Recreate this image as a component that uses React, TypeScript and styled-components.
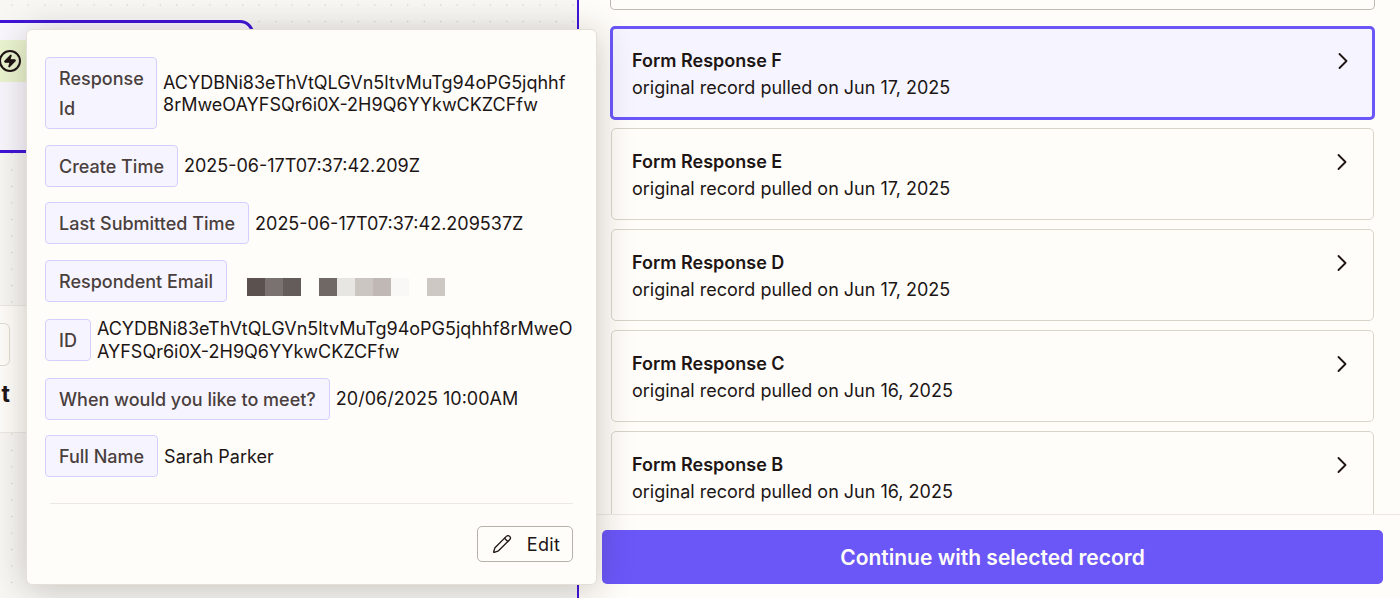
import styled, { createGlobalStyle } from 'styled-components';
import { ChevronRight, Pencil, Zap } from 'lucide-react';

const GlobalStyle = createGlobalStyle`
  html, body {
    margin: 0;
    height: 100%;
    overflow: hidden;
    background: #fffdf9;
    font-family: Inter, 'Liberation Sans', sans-serif;
    color: #201515;
  }
  * {
    box-sizing: border-box;
  }
`;

const fields = [
  { label: 'Response Id', value: 'ACYDBNi83eThVtQLGVn5ltvMuTg94oPG5jqhhf8rMweOAYFSQr6i0X-2H9Q6YYkwCKZCFfw' },
  { label: 'Create Time', value: '2025-06-17T07:37:42.209Z' },
  { label: 'Last Submitted Time', value: '2025-06-17T07:37:42.209537Z' },
  { label: 'Respondent Email', blurred: true },
  { label: 'ID', value: 'ACYDBNi83eThVtQLGVn5ltvMuTg94oPG5jqhhf8rMweOAYFSQr6i0X-2H9Q6YYkwCKZCFfw' },
  { label: 'When would you like to meet?', value: '20/06/2025 10:00AM' },
  { label: 'Full Name', value: 'Sarah Parker' },
];

const records = [
  { name: 'Form Response F', date: 'Jun 17, 2025', selected: true },
  { name: 'Form Response E', date: 'Jun 17, 2025' },
  { name: 'Form Response D', date: 'Jun 17, 2025' },
  { name: 'Form Response C', date: 'Jun 16, 2025' },
  { name: 'Form Response B', date: 'Jun 16, 2025' },
];

const blurGroups = [
  ['#5b5250', '#797270', '#645c5a'],
  ['#6f6865', '#e8e6e3', '#cbc6c2', '#bfb8b4', '#f9f8f6'],
  ['#cdc8c4'],
];

export default function App() {
  return (
    <Page>
      <GlobalStyle />
      <Canvas>
        <ZapNode>
          <NodeBar>
            <Zap size={14} strokeWidth={2} />
          </NodeBar>
        </ZapNode>
        <SideCard>
          <SideButton />
          <SideLetter>t</SideLetter>
        </SideCard>
        <Popover>
          <FieldList>
            {fields.map((field) => (
              <Field key={field.label}>
                <FieldLabel>{field.label}</FieldLabel>
                {field.blurred ? (
                  <Blurred>
                    {blurGroups.map((group, i) => (
                      <BlurGroup key={i}>
                        {group.map((color, j) => (
                          <BlurCell key={j} $color={color} />
                        ))}
                      </BlurGroup>
                    ))}
                  </Blurred>
                ) : (
                  <FieldValue>{field.value}</FieldValue>
                )}
              </Field>
            ))}
          </FieldList>
          <PopoverFooter>
            <EditButton>
              <Pencil size={20} strokeWidth={1.6} />
              Edit
            </EditButton>
          </PopoverFooter>
        </Popover>
      </Canvas>
      <Panel>
        <RecordList>
          <CutOffRecord />
          {records.map((record) => (
            <Record key={record.name} $selected={record.selected}>
              <RecordText>
                <RecordName>{record.name}</RecordName>
                <RecordDate>original record pulled on {record.date}</RecordDate>
              </RecordText>
              <ChevronRight size={28} strokeWidth={1.6} />
            </Record>
          ))}
        </RecordList>
        <PanelFooter>
          <ContinueButton>Continue with selected record</ContinueButton>
        </PanelFooter>
      </Panel>
    </Page>
  );
}

const Page = styled.div`
  display: flex;
  width: 1400px;
  height: 598px;
  overflow: hidden;
`;

const Canvas = styled.div`
  position: relative;
  z-index: 2;
  flex: 0 0 577px;
  height: 598px;
  background-color: #f8f7f3;
  background-image: radial-gradient(circle, #cfcbc4 0.8px, transparent 1px);
  background-size: 16.5px 16.5px;
  background-position: 3.5px -3.25px;
`;

const ZapNode = styled.div`
  position: absolute;
  left: -20px;
  top: 20px;
  width: 274px;
  height: 133px;
  padding-top: 17px;
  background: #f9f7fd;
  border: 3px solid #3f14d8;
  border-radius: 14px;
`;

const NodeBar = styled.div`
  display: flex;
  align-items: center;
  height: 42px;
  padding-left: 16px;
  background: #eaf4cf;

  svg {
    box-sizing: content-box;
    padding: 2px;
    border: 2px solid #201515;
    border-radius: 50%;
    fill: #201515;
  }
`;

const SideCard = styled.div`
  position: absolute;
  left: -60px;
  top: 305px;
  width: 120px;
  height: 128px;
  padding: 17px 0 0 49px;
  background: #fffdf9;
  border: 1px solid #ece9e2;
  border-radius: 6px;
`;

const SideButton = styled.div`
  width: 20px;
  height: 43px;
  border: 1px solid #e0dcd2;
  border-radius: 6px;
`;

const SideLetter = styled.div`
  width: 20px;
  margin-top: 14px;
  font-size: 23px;
  font-weight: 700;
  line-height: 28px;
  text-align: right;
`;

const Popover = styled.div`
  position: absolute;
  left: 26px;
  top: 29px;
  width: 571px;
  height: 556px;
  padding: 27px 23px 23px 18px;
  background: #fffdf9;
  border: 1px solid #e4e0d7;
  border-radius: 6px;
  box-shadow: 0 4px 36px rgba(32, 21, 21, 0.24);
`;

const FieldList = styled.div`
  display: flex;
  flex-direction: column;
  gap: 15.5px;
`;

const Field = styled.div`
  display: flex;
  align-items: center;
  gap: 6px;
`;

const FieldLabel = styled.div`
  flex: none;
  max-width: 112px;
  padding: 6px 13px 4px;
  background: #f6f5ff;
  border: 1px solid #d3d0ff;
  border-radius: 4px;
  color: #4a3f3d;
  font-size: 18px;
  font-weight: 500;
  line-height: 30px;

  ${Field}:not(:first-child) > & {
    max-width: none;
  }
`;

const FieldValue = styled.div`
  min-width: 0;
  margin: 1px 0 -1px;
  font-size: 18px;
  line-height: 22.5px;
  overflow-wrap: anywhere;
`;

const Blurred = styled.div`
  display: flex;
  gap: 18px;
  margin: 12px 0 0 14px;
`;

const BlurGroup = styled.div`
  display: flex;
`;

const BlurCell = styled.span<{ $color: string }>`
  width: 18px;
  height: 18px;
  background: ${(p) => p.$color};
`;

const PopoverFooter = styled.div`
  display: flex;
  justify-content: flex-end;
  margin: 26px 0 0 5px;
  padding-top: 22px;
  border-top: 1px solid #ece9e2;
`;

const EditButton = styled.button`
  display: flex;
  align-items: center;
  justify-content: center;
  gap: 15px;
  width: 96px;
  height: 36px;
  padding: 0 0 0 2px;
  background: transparent;
  border: 1px solid #b5b2aa;
  border-radius: 5px;
  color: #201515;
  font: 400 18px Inter, 'Liberation Sans', sans-serif;
  letter-spacing: 0.3px;
`;

const Panel = styled.div`
  display: flex;
  flex-direction: column;
  flex: 1;
  height: 598px;
  background: #fffdf9;
  border-left: 2px solid #3f14d8;
`;

const RecordList = styled.div`
  display: flex;
  flex-direction: column;
  gap: 9px;
  flex: 1;
  min-height: 0;
  overflow: hidden;
  padding: 0 26px 0 32px;
`;

const CutOffRecord = styled.div`
  flex: none;
  height: 19px;
  margin: -9px -1px 8px;
  border: 1px solid #bdb9af;
  border-top: 0;
  border-radius: 0 0 5px 5px;
`;

const Record = styled.div<{ $selected?: boolean }>`
  display: flex;
  align-items: flex-start;
  justify-content: space-between;
  flex: none;
  height: ${(p) => (p.$selected ? '94px' : '92px')};
  margin: ${(p) => (p.$selected ? '-1px' : '0')};
  padding: ${(p) => (p.$selected ? '20px 15px 0 19px' : '21px 17px 0 20px')};
  background: ${(p) => (p.$selected ? '#f6f5ff' : 'transparent')};
  border: ${(p) => (p.$selected ? '3px solid #6b57f8' : '1px solid #d8d4c8')};
  border-radius: 5px;

  & > svg {
    margin-top: -2px;
    flex: none;
  }
`;

const RecordText = styled.div`
  display: flex;
  flex-direction: column;
  gap: 4px;
`;

const RecordName = styled.div`
  font-size: 18px;
  font-weight: 600;
  line-height: 23px;
`;

const RecordDate = styled.div`
  font-size: 18px;
  line-height: 23px;
`;

const PanelFooter = styled.div`
  flex: none;
  height: 84px;
  padding: 15px 17px 0 23px;
  border-top: 1px solid #ece9e2;
`;

const ContinueButton = styled.button`
  width: 100%;
  height: 54px;
  background: #6b57f8;
  border: 0;
  border-radius: 5px;
  color: #fffdf9;
  font: 600 21px Inter, 'Liberation Sans', sans-serif;
`;
